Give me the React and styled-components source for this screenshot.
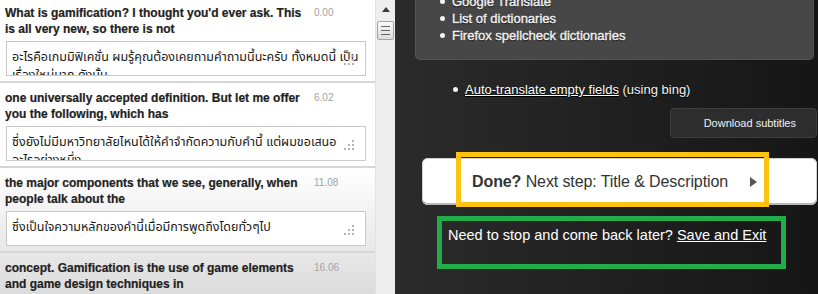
import React from "react";
import styled, { createGlobalStyle } from "styled-components";

const GlobalStyle = createGlobalStyle`
  html, body {
    margin: 0;
    padding: 0;
  }
  body {
    width: 818px;
    height: 294px;
    overflow: hidden;
    font-family: "Liberation Sans", Arial, sans-serif;
  }
`;

const Page = styled.div`
  display: flex;
  width: 818px;
  height: 294px;
  overflow: hidden;
`;

const Transcript = styled.div`
  width: 375px;
  flex: none;
  overflow: hidden;
  background: linear-gradient(to bottom, #fff 0, #fff 165px, #dcdcdc 294px);
`;

const Lines = styled.div`
  margin-top: -2px;
`;

const Line = styled.div`
  height: 85px;
  box-sizing: border-box;
  padding-top: 7px;
  border-bottom: 2px solid #d6d6d6;
`;

const LineHead = styled.div`
  display: flex;
  align-items: flex-start;
`;

const Caption = styled.div`
  width: 303px;
  margin-left: 5px;
  font-size: 12px;
  line-height: 16px;
  font-weight: bold;
  color: #222;
  -webkit-text-stroke: 0.2px #222;
`;

const Time = styled.div`
  margin-left: 6px;
  font-size: 10px;
  line-height: 16px;
  color: #a3a3a3;
`;

const TranslationBox = styled.div`
  position: relative;
  margin: 4px 9px 0 6px;
  height: 35px;
  box-sizing: border-box;
  border: 1px solid #c8c8c8;
  background: #fff;
  overflow: hidden;
  padding: 6px 0 0 5px;
  font-family: "Liberation Sans", "Noto Sans Thai", "DejaVu Sans", sans-serif;
  font-size: 12.5px;
  line-height: 18px;
  color: #1a1a1a;
  white-space: pre-line;
`;

const Grip = styled.svg`
  position: absolute;
  right: 11px;
  top: 13px;
`;

const Scrollbar = styled.div`
  width: 20px;
  flex: none;
  box-sizing: border-box;
  background: #eeeeee;
  border-left: 1px solid #e2e2e2;
  display: flex;
  flex-direction: column;
  align-items: center;
`;

const ScrollArrow = styled.div`
  width: 0;
  height: 0;
  margin-top: 7px;
  border-left: 4px solid transparent;
  border-right: 4px solid transparent;
  border-bottom: 5px solid #3a3a3a;
`;

const Thumb = styled.div`
  margin-top: 9px;
  width: 17px;
  height: 19px;
  box-sizing: border-box;
  border: 1px solid #a4a4a4;
  border-radius: 2px;
  background: linear-gradient(to bottom, #fbfbfb, #dcdcdc);
  display: flex;
  flex-direction: column;
  align-items: center;
  justify-content: center;
  gap: 3px;
`;

const ThumbLine = styled.span`
  width: 9px;
  height: 1px;
  background: #666;
`;

const Side = styled.div`
  flex: 1;
  display: flex;
  flex-direction: column;
  background: linear-gradient(to right, #2b2b2b, #161616);
  color: #f2f2f2;
  font-size: 13px;
`;

const HelpBox = styled.div`
  margin: -12px 4px 0 20px;
  padding: 5px 0 15px 36px;
  background: #474747;
  border: 1px solid #545454;
  border-top: none;
  border-radius: 0 0 5px 5px;
`;

const BulletList = styled.ul`
  margin: 0;
  padding: 0;
  list-style: none;
`;

const Bullet = styled.li`
  position: relative;
  line-height: 17px;
  text-shadow: 0 1px 1px #000;

  &::before {
    content: "";
    position: absolute;
    left: -12px;
    top: 6px;
    width: 5px;
    height: 5px;
    border-radius: 50%;
    background: #f2f2f2;
  }
`;

const HelpItem = styled(Bullet)`
  -webkit-text-stroke: 0.4px #f2f2f2;
`;

const ToolList = styled(BulletList)`
  margin: 21px 0 0 70px;
`;

const Link = styled.a`
  color: #fff;
  text-decoration: underline;
`;

const DownloadButton = styled.button`
  align-self: flex-end;
  margin: 10px 1px 0 0;
  width: 147px;
  height: 30px;
  box-sizing: border-box;
  background: #2d2d2d;
  border: 1px solid #3d3d3d;
  border-radius: 4px;
  color: #f2f2f2;
  font-family: "Liberation Sans", Arial, sans-serif;
  font-size: 11px;
  text-align: right;
  padding: 0 20px 0 0;
`;

const NextButton = styled.div`
  position: relative;
  margin: 20px 1px 0 27px;
  height: 47px;
  box-sizing: border-box;
  background: #fff;
  border-radius: 6px;
  box-shadow: inset 0 -2px 0 #b8b8b8, inset 0 0 0 1px #d0d0d0;
  display: flex;
  align-items: center;
  padding-left: 50px;
  color: #333;
  font-size: 16px;
  letter-spacing: -0.1px;
`;

const NextLabel = styled.span`
  b {
    font-weight: bold;
  }
`;

const NextArrow = styled.span`
  margin-left: 22px;
  width: 0;
  height: 0;
  border-top: 5px solid transparent;
  border-bottom: 5px solid transparent;
  border-left: 7px solid #555;
`;

const Highlight = styled.div`
  position: absolute;
  left: 34px;
  top: -6px;
  width: 313px;
  height: 55px;
  box-sizing: border-box;
  border: 5px solid ${(p) => p.$color};
  pointer-events: none;
`;

const SaveBox = styled.div`
  margin: 11px 0 0 42px;
  width: 349px;
  height: 53px;
  box-sizing: border-box;
  border: 5px solid #22ad4a;
  padding: 6px 6px 0;
  font-size: 14.5px;
  line-height: 16px;
  color: #fff;
`;

const lines = [
  {
    time: "0.00",
    text: "What is gamification? I thought you'd ever ask. This is all very new, so there is not",
    thai: "อะไรคือเกมมิฟิเคชั่น ผมรู้คุณต้องเคยถามคำถามนี้นะครับ ทั้งหมดนี้ เป็น\nเรื่องใหม่มาก ดังนั้น",
  },
  {
    time: "6.02",
    text: "one universally accepted definition. But let me offer you the following, which has",
    thai: "ซึ่งยังไม่มีมหาวิทยาลัยไหนได้ให้คำจำกัดความกับคำนี้ แต่ผมขอเสนอ\nอะไรอย่างหนึ่ง",
  },
  {
    time: "11.08",
    text: "the major components that we see, generally, when people talk about the",
    thai: "ซึ่งเป็นใจความหลักของคำนี้เมื่อมีการพูดถึงโดยทั่วๆไป",
  },
  {
    time: "16.06",
    text: "concept. Gamification is the use of game elements and game design techniques in",
    thai: "",
  },
];

function GripIcon() {
  const dots = [
    [8, 0],
    [4, 4],
    [8, 4],
    [0, 8],
    [4, 8],
    [8, 8],
  ];
  return (
    <Grip width="10" height="10" viewBox="0 0 10 10">
      {dots.map(([x, y]) => (
        <rect key={`${x}-${y}`} x={x} y={y} width="2" height="2" fill="#b4b4b4" />
      ))}
    </Grip>
  );
}

export default function App() {
  return (
    <>
      <GlobalStyle />
      <Page>
        <Transcript>
          <Lines>
            {lines.map((line) => (
              <Line key={line.time}>
                <LineHead>
                  <Caption>{line.text}</Caption>
                  <Time>{line.time}</Time>
                </LineHead>
                <TranslationBox>
                  {line.thai}
                  <GripIcon />
                </TranslationBox>
              </Line>
            ))}
          </Lines>
        </Transcript>

        <Scrollbar>
          <ScrollArrow />
          <Thumb>
            <ThumbLine />
            <ThumbLine />
            <ThumbLine />
          </Thumb>
        </Scrollbar>

        <Side>
          <HelpBox>
            <BulletList>
              <HelpItem>Google Translate</HelpItem>
              <HelpItem>List of dictionaries</HelpItem>
              <HelpItem>Firefox spellcheck dictionaries</HelpItem>
            </BulletList>
          </HelpBox>

          <ToolList>
            <Bullet>
              <Link href="#">Auto-translate empty fields</Link> (using bing)
            </Bullet>
          </ToolList>

          <DownloadButton>Download subtitles</DownloadButton>

          <NextButton>
            <NextLabel>
              <b>Done?</b> Next step: Title &amp; Description
            </NextLabel>
            <NextArrow />
            <Highlight $color="#fdc30f" />
          </NextButton>

          <SaveBox>
            Need to stop and come back later? <Link href="#">Save and Exit</Link>
          </SaveBox>
        </Side>
      </Page>
    </>
  );
}
